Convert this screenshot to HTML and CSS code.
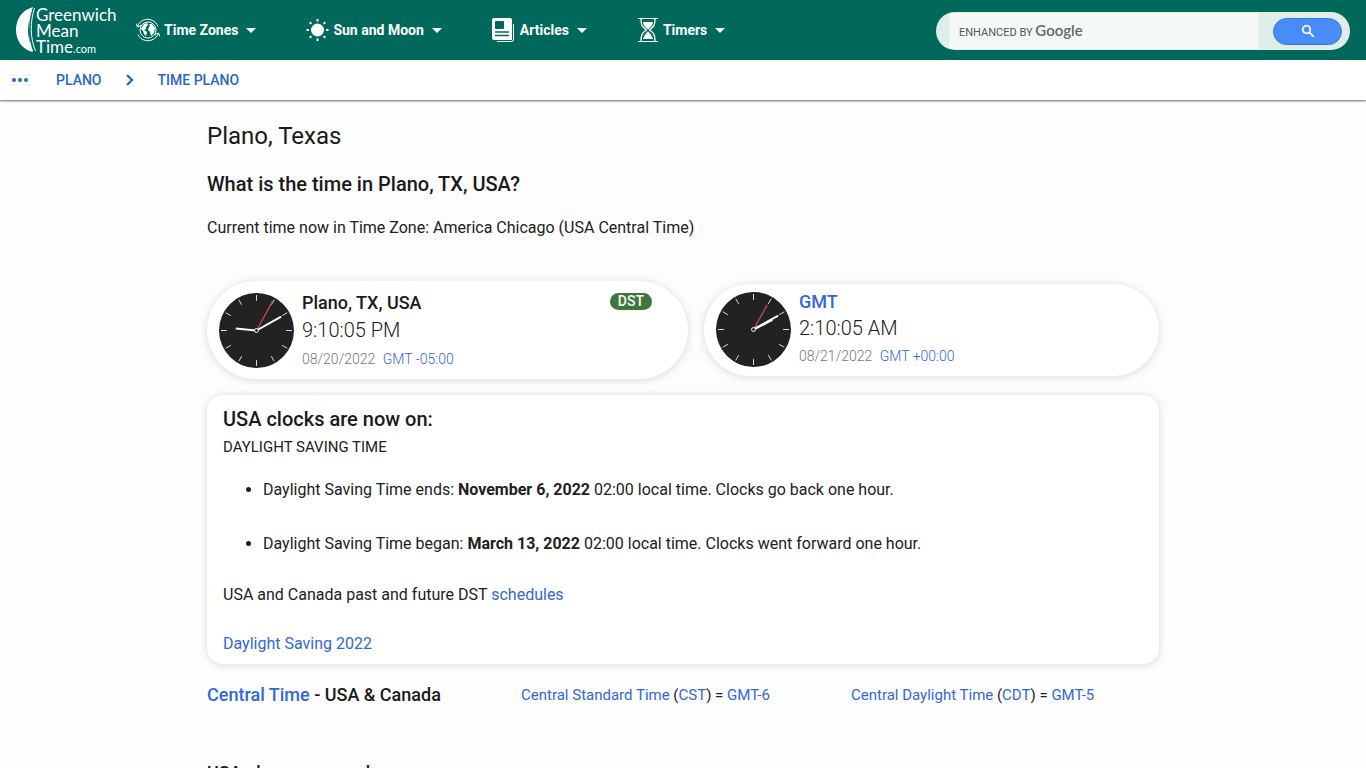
FILE: index.html
```html
<!DOCTYPE html>
<html lang="en">
<head>
    <meta charset="UTF-8">
    <meta name="viewport" content="width=device-width, initial-scale=1.0">
    <title>Time in Plano, Texas</title>
    <link rel="stylesheet" href="styles.css">
</head>
<body>
    <header class="topbar">
        <a class="logo" href="#" aria-label="Greenwich Mean Time home">
            <svg width="20" height="46" viewBox="0 0 20 46">
                <path d="M17 0C6 3 0 12 0 23s7 20 17 22c-3-7-5-14-5-22s2-16 5-23z" fill="#fff"/>
                <path d="M12 3h4C12 15 12 31 17 44l-3-1z" fill="#fff"/>
                <path d="M18.500 1C14 15 14 31 19.500 44" fill="none" stroke="#fff"/>
            </svg>
            <span class="logo-text">Greenwich<br>Mean<br>Time<small>.com</small></span>
        </a>
        <nav class="menu">
            <button type="button" class="menu-item">
                <svg width="24" height="24" viewBox="0 0 24 24" fill="none" stroke="#fff">
                    <circle cx="12" cy="12" r="8"/>
                    <path d="M6 9l2-3 3-1 1 2-2 2v2l-2 1 3 2-1 4-2-2-1-3-2-2zM13 6l3 0 3 4-1 5-3 3-1-4-2-2 1-3 1-1z" fill="#fff" stroke="none"/>
                    <path d="M1.500 9C3 3 9 .5 14 1.500c4 1 7 4 8 7M22.500 15c-2 6-8 8.500-13 7.500-4-1-6-3-7.500-6M0 5.500L1.500 9 5 7.500M24 18.500L22.500 15 19 16.500"/>
                </svg>
                Time Zones
                <span class="caret"></span>
            </button>
            <button type="button" class="menu-item">
                <svg width="23" height="24" viewBox="0 0 23 24" stroke="#fff" stroke-width="2">
                    <circle cx="11.500" cy="12" r="5.500" fill="#fff"/>
                    <path d="M11.500 1v2.500M11.500 20.500V23M.5 12H3M20 12h2.500M3.700 4.200l1.700 1.700M17.600 18.100l1.700 1.700M3.700 19.800l1.700-1.700M17.600 5.900l1.700-1.700"/>
                </svg>
                Sun and Moon
                <span class="caret"></span>
            </button>
            <button type="button" class="menu-item">
                <svg width="24" height="24" viewBox="0 0 24 24">
                    <path d="M2 0h16a2 2 0 0 1 2 2v20H2a2 2 0 0 1-2-2V2a2 2 0 0 1 2-2z" fill="#fff"/>
                    <rect x="3" y="3" width="9" height="8" rx="1" fill="#00695c"/>
                    <path d="M3 14h14M3 17.500h14" stroke="#00695c" stroke-width="1.500"/>
                    <path d="M21.500 6v15.500a2 2 0 0 1-2 2H5" fill="none" stroke="#fff"/>
                </svg>
                Articles
                <span class="caret"></span>
            </button>
            <button type="button" class="menu-item">
                <svg width="22" height="24" viewBox="0 0 22 24" fill="none" stroke="#fff">
                    <path d="M1 .5h20M1 23.500h20"/>
                    <path d="M4 1c0 6 1 8 5.500 11C5 15 4 17 4 23M18 1c0 6-1 8-5.500 11C17 15 18 17 18 23" stroke-width="1.300"/>
                    <path d="M6 4h10c0 3-2 5-4.500 7h-1C8 9 6 7 6 4zM11 13.500l3 3 2 4.500H6l2-4.500z" fill="#fff" stroke="none"/>
                </svg>
                Timers
                <span class="caret"></span>
            </button>
        </nav>
        <form class="search">
            <div class="search-field">
                <input type="text" id="q" name="q">
                <label for="q">ENHANCED BY <span class="google">Google</span></label>
            </div>
            <button type="submit" class="search-btn" aria-label="Search">
                <svg width="14" height="14" viewBox="0 0 14 14" fill="none" stroke="#fff" stroke-width="1.800">
                    <circle cx="5.500" cy="5.500" r="3.800"/>
                    <path d="M8.300 8.300l4.500 4.500"/>
                </svg>
            </button>
        </form>
    </header>

    <nav class="crumbs">
        <a href="#" class="dots" aria-label="More"><i></i><i></i><i></i></a>
        <a href="#">PLANO</a>
        <svg width="8" height="12" viewBox="0 0 8 12" fill="none" stroke="#2a62b8" stroke-width="2.200">
            <path d="M1 1l5 5-5 5"/>
        </svg>
        <a href="#">TIME PLANO</a>
    </nav>

    <main class="content">
        <h1>Plano, Texas</h1>
        <h2>What is the time in Plano, TX, USA?</h2>
        <p class="intro">Current time now in Time Zone: America Chicago (USA Central Time)</p>

        <div class="clocks">
            <section class="clock-card local">
                <svg class="clock" viewBox="0 0 76 76">
                    <circle cx="38" cy="38" r="38" fill="#222"/>
                    <path class="ticks" d="M38 2v6M38 68v6M2 38h6M68 38h6M56 6.800l-3 5.200M69.200 20l-5.200 3M69.200 56l-5.200-3M56 69.200L53 64M20 69.200l3-5.200M6.800 56l5.200-3M6.800 20l5.200 3M20 6.800l3 5.200"/>
                    <path d="M38 38L17 36" stroke="#fff" stroke-width="2"/>
                    <path d="M38 38L63 24" stroke="#fff" stroke-width="2"/>
                    <path d="M38 38L54 9" stroke="#e04545" stroke-width="1.200"/>
                    <circle cx="38" cy="38" r="2" fill="#222" stroke="#fff"/>
                </svg>
                <div class="clock-info">
                    <h3>Plano, TX, USA</h3>
                    <div class="time">9:10:05 PM</div>
                    <div class="date">08/20/2022 <a href="#">GMT -05:00</a></div>
                </div>
                <span class="dst">DST</span>
            </section>
            <section class="clock-card">
                <svg class="clock" viewBox="0 0 76 76">
                    <circle cx="38" cy="38" r="38" fill="#222"/>
                    <path class="ticks" d="M38 2v6M38 68v6M2 38h6M68 38h6M56 6.800l-3 5.200M69.200 20l-5.200 3M69.200 56l-5.200-3M56 69.200L53 64M20 69.200l3-5.200M6.800 56l5.200-3M6.800 20l5.200 3M20 6.800l3 5.200"/>
                    <path d="M38 38L57 28" stroke="#fff" stroke-width="2.500"/>
                    <path d="M38 38L63 24" stroke="#fff" stroke-width="2"/>
                    <path d="M38 38L52 13" stroke="#e04545" stroke-width="1.200"/>
                    <circle cx="38" cy="38" r="2" fill="#222" stroke="#fff"/>
                </svg>
                <div class="clock-info">
                    <h3><a href="#">GMT</a></h3>
                    <div class="time">2:10:05 AM</div>
                    <div class="date">08/21/2022 <a href="#">GMT +00:00</a></div>
                </div>
            </section>
        </div>

        <section class="panel">
            <h2>USA clocks are now on:</h2>
            <p class="mode">DAYLIGHT SAVING TIME</p>
            <ul>
                <li>Daylight Saving Time ends: <b>November 6, 2022</b> 02:00 local time. Clocks go back one hour.</li>
                <li>Daylight Saving Time began: <b>March 13, 2022</b> 02:00 local time. Clocks went forward one hour.</li>
            </ul>
            <p>USA and Canada past and future DST <a href="#">schedules</a></p>
            <p><a href="#">Daylight Saving 2022</a></p>
        </section>

        <div class="zones">
            <h3><a href="#">Central Time</a> - USA &amp; Canada</h3>
            <span><a href="#">Central Standard Time</a> (<a href="#">CST</a>) = <a href="#">GMT-6</a></span>
            <span><a href="#">Central Daylight Time</a> (<a href="#">CDT</a>) = <a href="#">GMT-5</a></span>
        </div>

        <h3 class="next">USA phone area codes</h3>
    </main>
</body>
</html>
```
FILE: styles.css
```css
* {
    box-sizing: border-box;
}

html {
    overflow: hidden;
}

body {
    margin: 0;
    height: 100vh;
    overflow: hidden;
    font-family: Roboto, sans-serif;
    font-size: 16px;
    line-height: 24px;
    color: #212121;
    background-color: #fdfdfd;
}

a {
    color: #3367d6;
    text-decoration: none;
}

h1, h2, h3, p, ul {
    margin: 0;
}

h1, h2, h3 {
    color: #1a1a1a;
}

svg {
    display: block;
    flex: none;
}

/* Header */
.topbar {
    display: flex;
    align-items: center;
    height: 60px;
    padding: 0 16px;
    background-color: #00695c;
}

.logo {
    display: flex;
    width: 120px;
    padding-top: 4px;
    color: #fff;
    font-family: Lato, sans-serif;
    font-size: 17px;
    line-height: 16px;
}

.logo small {
    font-size: 11px;
}

.menu {
    display: flex;
    gap: 50px;
}

.menu-item {
    display: flex;
    align-items: center;
    gap: 4px;
    padding: 0;
    border: none;
    background: none;
    color: #fff;
    font-family: inherit;
    font-size: 14px;
    font-weight: bold;
    cursor: pointer;
}

.caret {
    margin-left: 4px;
    border: 5px solid transparent;
    border-top-color: #fff;
    border-bottom: none;
}

/* Search */
.search {
    display: flex;
    align-items: center;
    justify-content: space-between;
    width: 414px;
    height: 38px;
    margin-top: 2px;
    margin-left: auto;
    padding: 0 8px 0 13px;
    border-radius: 19px;
    background-color: #e0eeea;
}

.search-field {
    position: relative;
    width: 310px;
    height: 36px;
}

.search-field input {
    width: 100%;
    height: 100%;
    padding: 0 10px;
    border: none;
    background-color: #f4f9f7;
}

.search-field label {
    position: absolute;
    top: 5px;
    left: 10px;
    color: #555;
    font-size: 11px;
    pointer-events: none;
}

.google {
    font-family: Lato, sans-serif;
    font-size: 15px;
    font-weight: 600;
    color: #666;
}

.search-btn {
    display: flex;
    align-items: center;
    justify-content: center;
    width: 69px;
    height: 27px;
    border: 1px solid #3079ed;
    border-radius: 14px;
    background-color: #4a8cf7;
}

/* Breadcrumbs */
.crumbs {
    display: flex;
    align-items: center;
    gap: 24px;
    height: 40px;
    padding: 0 12px 1px;
    background-color: #fff;
    box-shadow: 0 1px 2px rgba(0, 0, 0, 0.6);
    font-size: 14px;
    font-weight: 500;
}

.crumbs a {
    color: #2a66c8;
}

.dots {
    display: flex;
    gap: 2px;
    width: 20px;
}

.dots i {
    width: 4px;
    height: 4px;
    border-radius: 50%;
    background-color: #2a66c8;
}

/* Content */
.content {
    max-width: 952px;
    margin: 0 auto;
    padding-top: 20px;
}

h1 {
    font-size: 24px;
    font-weight: 400;
    line-height: 32px;
}

h2 {
    font-size: 20px;
    font-weight: 500;
}

h3 {
    font-size: 18px;
    font-weight: 500;
}

.content > h2 {
    margin-top: 20px;
}

.intro {
    margin: 20px 0 41px;
}

.clocks {
    display: grid;
    grid-template-columns: 481fr 455fr;
    align-items: center;
    gap: 16px;
}

.clock-card {
    display: flex;
    align-items: flex-start;
    gap: 8px;
    padding: 8px 36px 8px 12px;
    border-radius: 50px;
    background-color: #fff;
    box-shadow: 0 1px 8px rgba(0, 0, 0, 0.15);
}

.clock-card.local {
    padding-top: 12px;
}

.clock {
    width: 75px;
    height: 75px;
}

.ticks {
    stroke: #ddd;
}

.clock-info {
    flex: 1;
}

.clock-info h3 {
    line-height: 20px;
}

.time {
    font-size: 20px;
    font-weight: 300;
    line-height: 32px;
}

.local .time {
    line-height: 34px;
}

.date {
    font-size: 14px;
    font-weight: 300;
    color: #777;
}

.date a {
    margin-left: 4px;
}

.dst {
    padding: 0 8px;
    border-radius: 9px;
    background-color: #3f763a;
    color: #fff;
    font-size: 14px;
    font-weight: 500;
    line-height: 17px;
}

.panel {
    margin-top: 16px;
    padding: 12px 16px 8px;
    border-radius: 16px;
    background-color: #fff;
    box-shadow: 0 1px 8px rgba(0, 0, 0, 0.15);
}

.panel .mode {
    margin-top: 4px;
    font-size: 15px;
}

.panel ul {
    margin: 19px 0 27px;
    padding-left: 40px;
}

.panel li + li {
    margin-top: 30px;
}

.panel p + p {
    margin-top: 25px;
}

.zones {
    display: grid;
    grid-template-columns: 314fr 330fr 308fr;
    align-items: center;
    margin-top: 19px;
    font-size: 15px;
}

.next {
    margin-top: 54px;
}
```
